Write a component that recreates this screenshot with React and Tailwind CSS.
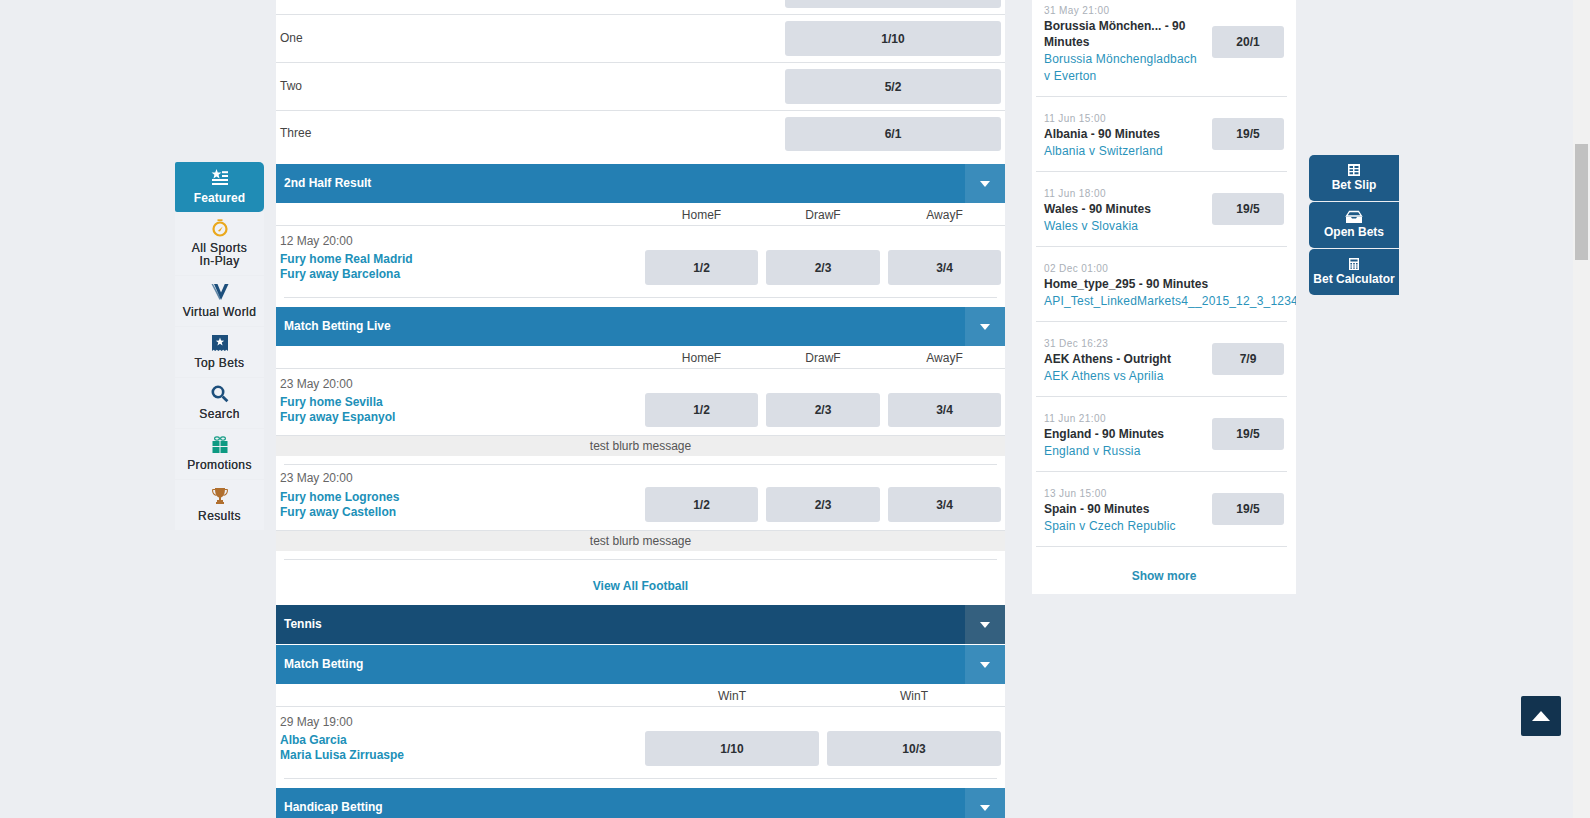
const FONT = "font-['Liberation_Sans',Arial,sans-serif]";

function Star({ cx, cy, r, fill }) {
  const pts = [];
  for (let i = 0; i < 10; i++) {
    const rad = i % 2 === 0 ? r : r * 0.42;
    const a = (Math.PI / 5) * i - Math.PI / 2;
    pts.push(`${(cx + rad * Math.cos(a)).toFixed(2)},${(cy + rad * Math.sin(a)).toFixed(2)}`);
  }
  return <polygon points={pts.join(" ")} fill={fill} />;
}

const icons = {
  featured: (
    <svg width="18" height="18" viewBox="0 0 18 18">
      <Star cx={5.5} cy={5.2} r={5.2} fill="#fff" />
      <rect x="11" y="2.2" width="6" height="2" fill="#fff" />
      <rect x="11" y="6" width="6" height="2" fill="#fff" />
      <rect x="1" y="10" width="16" height="2" fill="#fff" />
      <rect x="1" y="14" width="16" height="2" fill="#fff" />
    </svg>
  ),
  stopwatch: (
    <svg width="18" height="18" viewBox="0 0 18 18">
      <rect x="6.5" y="0.3" width="5" height="1.8" fill="#eaa81c" />
      <circle cx="9" cy="10" r="6.5" fill="none" stroke="#eaa81c" strokeWidth="2.2" />
      <path d="M6.8 12 L11.8 7.4 L9 12.4 Z" fill="#eaa81c" />
    </svg>
  ),
  virtual: (
    <svg width="18" height="18" viewBox="0 0 18 18">
      <polygon points="0.5,1 2,1 9.5,15 8.6,17" fill="#5f86a6" />
      <polygon points="3,1 6.5,1 10,9.5 13.8,1 17.5,1 10,17" fill="#1d4f7c" />
    </svg>
  ),
  topBets: (
    <svg width="18" height="18" viewBox="0 0 18 18">
      <path d="M1 1 H17 V17 L15.4 15.8 L13.8 17 L12.2 15.8 L10.6 17 L9 15.8 L7.4 17 L5.8 15.8 L4.2 17 L2.6 15.8 L1 17 Z" fill="#1d4f7c" />
      <Star cx={9} cy={8} r={4.4} fill="#fff" />
    </svg>
  ),
  search: (
    <svg width="18" height="18" viewBox="0 0 18 18">
      <circle cx="7" cy="7" r="5.2" fill="none" stroke="#1d4f7c" strokeWidth="2.6" />
      <path d="M11.6 11.6 L16.4 16.2" stroke="#1d4f7c" strokeWidth="2.8" />
    </svg>
  ),
  gift: (
    <svg width="18" height="18" viewBox="0 0 18 18">
      <ellipse cx="6" cy="2.6" rx="2.4" ry="1.7" fill="none" stroke="#0d9a82" strokeWidth="1.1" />
      <ellipse cx="12" cy="2.6" rx="2.4" ry="1.7" fill="none" stroke="#0d9a82" strokeWidth="1.1" />
      <rect x="1.5" y="5" width="7" height="5" fill="#0d9a82" />
      <rect x="9.5" y="5" width="7" height="5" fill="#0d9a82" />
      <rect x="1.5" y="11" width="7" height="6" fill="#0d9a82" />
      <rect x="9.5" y="11" width="7" height="6" fill="#0d9a82" />
    </svg>
  ),
  trophy: (
    <svg width="18" height="18" viewBox="0 0 18 18">
      <path d="M1.5 2.5 H4.5 M16.5 2.5 H13.5 M1.5 2.5 C1.5 6 3 8 5.5 8.5 M16.5 2.5 C16.5 6 15 8 12.5 8.5" fill="none" stroke="#b06f2e" strokeWidth="1.1" />
      <path d="M4 1 H14 C14 6 13 9.5 10 10.5 V13 H12 V15 H13 V17 H5 V15 H6 V13 H8 V10.5 C5 9.5 4 6 4 1 Z" fill="#b06f2e" />
    </svg>
  ),
  slip: (
    <svg width="14" height="14" viewBox="0 0 14 14">
      <path d="M1 1 H13 V13 H1 Z M2.5 3 V5 H6 V3 Z M7.5 3 V5 H11.5 V3 Z M2.5 6.2 V8 H6 V6.2 Z M7.5 6.2 V8 H11.5 V6.2 Z M2.5 9.2 V11.3 H6 V9.2 Z M7.5 9.2 V11.3 H11.5 V9.2 Z" fill="#fff" fillRule="evenodd" />
    </svg>
  ),
  tray: (
    <svg width="18" height="14" viewBox="0 0 18 14">
      <path d="M4.5 1.5 H13.5 L16.5 6 H1.5 Z" fill="none" stroke="#fff" strokeWidth="1.3" />
      <path d="M1 7 H6 L7 8.6 H11 L12 7 H17 V13 H1 Z" fill="#fff" />
    </svg>
  ),
  calc: (
    <svg width="14" height="14" viewBox="0 0 14 14">
      <path d="M2 1 H12 V13 H2 Z M3.4 2.4 V4.6 H10.6 V2.4 Z M3.4 6 V7.4 H5 V6 Z M6.2 6 V7.4 H7.8 V6 Z M9 6 V7.4 H10.6 V6 Z M3.4 8.4 V9.6 H5 V8.4 Z M6.2 8.4 V9.6 H7.8 V8.4 Z M9 8.4 V9.6 H10.6 V8.4 Z M3.4 10.6 V11.8 H5 V10.6 Z M6.2 10.6 V11.8 H7.8 V10.6 Z M9 10.6 V11.8 H10.6 V10.6 Z" fill="#fff" fillRule="evenodd" />
    </svg>
  ),
};

const navItems = [
  { label: "All Sports", label2: "In-Play", icon: icons.stopwatch, h: "h-[64px]" },
  { label: "Virtual World", icon: icons.virtual, h: "h-[51px]" },
  { label: "Top Bets", icon: icons.topBets, h: "h-[51px]" },
  { label: "Search", icon: icons.search, h: "h-[51px]" },
  { label: "Promotions", icon: icons.gift, h: "h-[51px]" },
  { label: "Results", icon: icons.trophy, h: "h-[51px]" },
];

function SideNav() {
  return (
    <nav className="w-[89px] mt-[162px] shrink-0 text-[12px] leading-[13px] text-center tracking-[0.4px] text-[#2f3338]">
      <div className="h-[50px] bg-[#208cb5] rounded-tr-[5px] rounded-br-[5px] rounded-tl-[2px] rounded-bl-[2px] text-white font-bold tracking-[0.1px] flex flex-col items-center pt-[7px]">
        {icons.featured}
        <span className="mt-[5px]">Featured</span>
      </div>
      {navItems.map((item) => (
        <div key={item.label} className={`${item.h} bg-[#eff1f5] border-b border-[#eceef2] flex flex-col items-center pt-[7px]`}>
          {item.icon}
          <span className="mt-[5px] [text-shadow:0_0_0.6px_#2f3338] whitespace-nowrap">{item.label}</span>
          {item.label2 && <span className="[text-shadow:0_0_0.6px_#2f3338]">{item.label2}</span>}
        </div>
      ))}
    </nav>
  );
}

function Odd({ w, h = "h-[35px]", children }) {
  return (
    <div className={`${w} ${h} shrink-0 bg-[#dadee5] rounded-[3px] flex items-center justify-center text-[12px] font-bold text-[#2b2f33]`}>
      {children}
    </div>
  );
}

function Bar({ title, dark }) {
  return (
    <div className={`h-[39px] flex items-stretch text-white ${dark ? "bg-[#174d75]" : "bg-[#247fb3]"}`}>
      <div className="flex-1 pl-2 pb-[2px] flex items-center text-[12px] font-bold">{title}</div>
      <div className={`w-[40px] flex items-center justify-center ${dark ? "bg-[#34607f]" : "bg-[#3a8cbb]"}`}>
        <svg width="10" height="6" viewBox="0 0 10 6">
          <polygon points="0,0 10,0 5,6" fill="#fff" />
        </svg>
      </div>
    </div>
  );
}

function PlainRow({ label, odd, h = "h-[48px]", border = true, lead = "leading-[35px]", oddH }) {
  return (
    <div className={`${h} flex justify-between pl-1 pr-1 pt-[6px] ${border ? "border-b border-[#dfe2e6]" : ""}`}>
      <span className={`text-[12px] text-[#444] ${lead}`}>{label}</span>
      <Odd w="w-[216px]" h={oddH}>{odd}</Odd>
    </div>
  );
}

function ColHead({ labels, w }) {
  return (
    <div className="h-[23px] border-b border-[#dfe2e6] flex justify-end gap-2 pr-1">
      {labels.map((l, i) => (
        <div key={i} className={`${w[i]} text-center text-[12px] leading-[24px] text-[#444]`}>{l}</div>
      ))}
    </div>
  );
}

function Event({ date, home, away, odds, w, textPt = "pt-[8px]", oddPt = "pt-[24px]", gap = "mt-[3px]", oddH }) {
  return (
    <div className="flex justify-between pl-1 pr-1">
      <div className={textPt}>
        <div className="text-[12px] leading-[15px] text-[#666]">{date}</div>
        <div className={`${gap} text-[12px] leading-[15px] font-bold text-[#2090b8]`}>{home}</div>
        <div className="text-[12px] leading-[15px] font-bold text-[#2090b8]">{away}</div>
      </div>
      <div className={`flex gap-2 ${oddPt}`}>
        {odds.map((o, i) => (
          <Odd key={i} w={w[i]} h={oddH}>{o}</Odd>
        ))}
      </div>
    </div>
  );
}

const sep = "mx-2 border-t border-[#dfe2e6]";
const three = ["w-[113px]", "w-[114px]", "w-[113px]"];
const two = ["w-[174px]", "w-[174px]"];

function Blurb() {
  return (
    <div className="h-[20px] bg-[#eeeeee] text-center text-[12px] leading-[21px] text-[#555]">test blurb message</div>
  );
}

function MainColumn() {
  return (
    <main className="w-[729px] shrink-0 bg-white">
      <div className="h-[15px] border-b border-[#dfe2e6] flex justify-end pr-1 overflow-hidden">
        <div className="w-[216px] h-[8px] bg-[#dadee5] rounded-b-[3px]" />
      </div>
      <PlainRow label="One" odd="1/10" />
      <PlainRow label="Two" odd="5/2" />
      <PlainRow label="Three" odd="6/1" h="h-[53px]" border={false} lead="leading-[33px]" oddH="h-[34px]" />

      <Bar title="2nd Half Result" />
      <ColHead labels={["HomeF", "DrawF", "AwayF"]} w={three} />
      <Event date="12 May 20:00" home="Fury home Real Madrid" away="Fury away Barcelona" odds={["1/2", "2/3", "3/4"]} w={three} />
      <div className={`mt-[12px] ${sep}`} />
      <div className="h-[9px]" />

      <Bar title="Match Betting Live" />
      <ColHead labels={["HomeF", "DrawF", "AwayF"]} w={three} />
      <Event date="23 May 20:00" home="Fury home Sevilla" away="Fury away Espanyol" odds={["1/2", "2/3", "3/4"]} w={three} oddH="h-[34px]" />
      <div className="h-[9px] border-b border-[#dfe2e6]" />
      <Blurb />
      <div className={`mt-[8px] ${sep}`} />
      <Event date="23 May 20:00" home="Fury home Logrones" away="Fury away Castellon" odds={["1/2", "2/3", "3/4"]} w={three} textPt="pt-[6px]" oddPt="pt-[22px]" gap="mt-[4px]" />
      <div className="h-[9px] border-b border-[#dfe2e6]" />
      <Blurb />
      <div className={`mt-[8px] ${sep}`} />
      <div className="h-[45px] pt-[17px] text-center text-[12px] leading-[18px] font-bold text-[#2090b8]">View All Football</div>

      <Bar title="Tennis" dark />
      <div className="h-px bg-white" />
      <Bar title="Match Betting" />
      <ColHead labels={["WinT", "WinT"]} w={two} />
      <Event date="29 May 19:00" home="Alba Garcia" away="Maria Luisa Zirruaspe" odds={["1/10", "10/3"]} w={two} />
      <div className={`mt-[12px] ${sep}`} />
      <div className="h-[9px]" />
      <Bar title="Handicap Betting" />
    </main>
  );
}

const popular = [
  { date: "31 May 21:00", title: "Borussia Mönchen... - 90 Minutes", link: "Borussia Mönchengladbach v Everton", odd: "20/1", first: true },
  { date: "11 Jun 15:00", title: "Albania - 90 Minutes", link: "Albania v Switzerland", odd: "19/5" },
  { date: "11 Jun 18:00", title: "Wales - 90 Minutes", link: "Wales v Slovakia", odd: "19/5" },
  { date: "02 Dec 01:00", title: "Home_type_295 - 90 Minutes", link: "API_Test_LinkedMarkets4__2015_12_3_1234", nowrap: true },
  { date: "31 Dec 16:23", title: "AEK Athens - Outright", link: "AEK Athens vs Aprilia", odd: "7/9" },
  { date: "11 Jun 21:00", title: "England - 90 Minutes", link: "England v Russia", odd: "19/5" },
  { date: "13 Jun 15:00", title: "Spain - 90 Minutes", link: "Spain v Czech Republic", odd: "19/5" },
];

function PopularCard() {
  return (
    <aside className="w-[264px] h-[594px] ml-[27px] shrink-0 bg-white overflow-hidden">
      {popular.map((p) => (
        <div key={p.date + p.title} className={`ml-1 mr-[9px] border-b border-[#dfe2e6] flex ${p.first ? "h-[97px] pt-[3px]" : "h-[75px] pt-[14px]"}`}>
          <div className={`pl-2 ${p.nowrap ? "whitespace-nowrap" : "w-[176px] pr-[12px] shrink-0"}`}>
            <div className="text-[10px] leading-[15px] tracking-[0.4px] text-[#aab0b8]">{p.date}</div>
            <div className="text-[12px] leading-[16px] font-bold text-[#2b2f33]">{p.title}</div>
            <div className="mt-px text-[12px] leading-[17px] tracking-[0.2px] text-[#2a93bb]">{p.link}</div>
          </div>
          {p.odd && (
            <div className={p.first ? "mt-[23px]" : "mt-[7px]"}>
              <Odd w="w-[72px]" h="h-[32px]">{p.odd}</Odd>
            </div>
          )}
        </div>
      ))}
      <div className="pt-[20px] text-center text-[12px] leading-[18px] font-bold text-[#2a8fb5]">Show more</div>
    </aside>
  );
}

const betTabs = [
  { label: "Bet Slip", icon: icons.slip },
  { label: "Open Bets", icon: icons.tray },
  { label: "Bet Calculator", icon: icons.calc },
];

function BetTabs() {
  return (
    <div className="w-[90px] ml-[13px] mt-[155px] shrink-0 flex flex-col gap-px">
      {betTabs.map((t) => (
        <div key={t.label} className="h-[46px] bg-[#1e5a87] rounded-l-[5px] flex flex-col items-center pt-[8px] text-white text-[12px] leading-[14px] font-bold whitespace-nowrap">
          {t.icon}
          <span className="mt-[1px]">{t.label}</span>
        </div>
      ))}
    </div>
  );
}

export default function App() {
  return (
    <div className={`relative h-[818px] overflow-hidden flex bg-[#eceef2] ${FONT}`}>
      <div className="flex-1 flex pl-[175px] min-w-0">
        <SideNav />
        <div className="w-[12px] shrink-0" />
        <MainColumn />
        <PopularCard />
        <BetTabs />
      </div>
      <div className="w-[17px] shrink-0 bg-[#f1f1f1] px-[2px] pt-[144px]">
        <div className="h-[116px] bg-[#c1c1c1]" />
      </div>
      <button className="absolute left-[1521px] top-[696px] w-[40px] h-[40px] bg-[#12334f] rounded-[2px] flex items-center justify-center">
        <svg width="18" height="10" viewBox="0 0 18 10">
          <polygon points="0,10 9,0 18,10" fill="#fff" />
        </svg>
      </button>
    </div>
  );
}
